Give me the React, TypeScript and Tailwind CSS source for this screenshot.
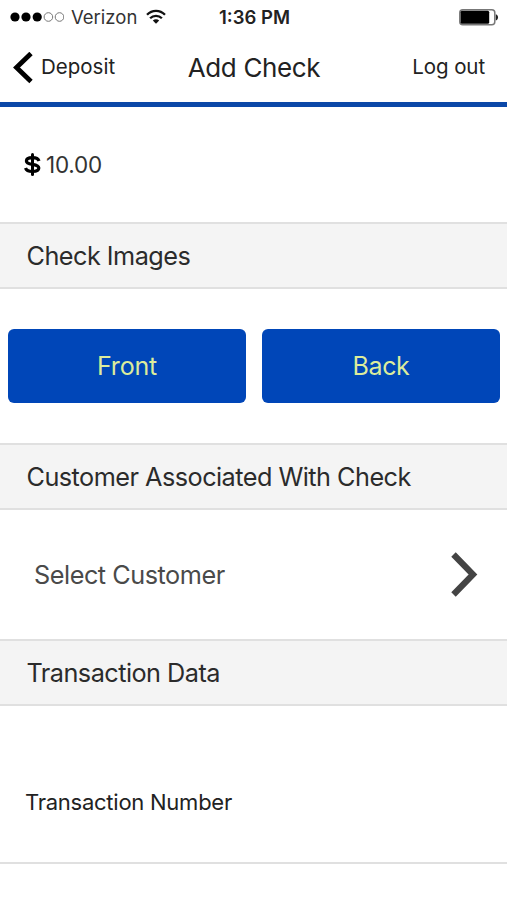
type SectionHeaderProps = {
  title: string;
};

const SignalDots = () => (
  <svg width="54" height="12" viewBox="0 0 54 12">
    <circle cx="5" cy="6" r="4.6" fill="#000" />
    <circle cx="16" cy="6" r="4.6" fill="#000" />
    <circle cx="27.2" cy="6" r="4.6" fill="#000" />
    <circle cx="38.4" cy="6" r="4.3" fill="none" stroke="#777" strokeWidth="1" />
    <circle cx="49.5" cy="6" r="4.3" fill="none" stroke="#777" strokeWidth="1" />
  </svg>
);

const WifiIcon = () => (
  <svg width="20" height="16" viewBox="0 0 20 16" fill="none" stroke="#111" strokeWidth="2.3">
    <path d="M1 5.8C6 0.5 14 0.5 19 5.8" />
    <path d="M4.1 9.3C7.4 6 12.6 6 15.9 9.3" />
    <path d="M10 14.7L6.8 11.5C8.6 9.9 11.4 9.9 13.2 11.5Z" fill="#111" stroke="none" />
  </svg>
);

const BatteryIcon = () => (
  <svg width="40" height="17" viewBox="0 0 40 17">
    <rect x="0.8" y="0.8" width="35" height="15" rx="3" fill="#fff" stroke="#777" strokeWidth="1.5" />
    <rect x="1.6" y="1.8" width="28.6" height="13" rx="1.5" fill="#000" />
    <path d="M36.8 5.2C39.8 6.2 39.8 10.4 36.8 11.4Z" fill="#222" />
  </svg>
);

const DollarIcon = () => (
  <svg width="17" height="23" viewBox="0 0 17 23" fill="none" stroke="#000">
    <path
      d="M15 8C14.2 5.6 12 4.6 8.5 4.6C4.8 4.6 2.4 5.7 2.4 8C2.4 10.3 4.8 10.9 8.5 11.4C12.4 12 14.8 12.8 14.8 15.1C14.8 17.4 12.2 18.5 8.5 18.5C4.8 18.5 2.2 17.5 1.5 15"
      strokeWidth="3.2"
    />
    <path d="M8.5 1.6V21.4" strokeWidth="3" strokeLinecap="round" />
  </svg>
);

const SectionHeader = ({ title }: SectionHeaderProps) => (
  <h2 className="flex h-[67px] items-center border-y-2 border-[#e0e0e0] bg-[#f4f4f4] pt-[2px] pl-[26.5px] text-[25.25px] tracking-[-0.53px] text-[#2b2b2b]">
    {title}
  </h2>
);

const App = () => {
  return (
    <div className="h-[900px] w-[507px] overflow-hidden bg-white font-['Inter',sans-serif] text-[#222] leading-none">
      <div className="grid h-[34px] grid-cols-3 items-center pr-2 pl-[10px]">
        <div className="flex items-center">
          <SignalDots />
          <span className="ml-[7px] text-[18.5px] text-[#333]">Verizon</span>
          <span className="ml-[9px]">
            <WifiIcon />
          </span>
        </div>
        <span className="text-center text-[18.5px] font-semibold">1:36 PM</span>
        <span className="flex justify-end">
          <BatteryIcon />
        </span>
      </div>

      <header className="grid h-[73px] grid-cols-[1fr_auto_1fr] items-center border-b-[5px] border-[#0b48a8] pr-[22px] pb-[1px] pl-[13px]">
        <button className="flex items-center text-[20.5px]">
          <svg width="20" height="32" viewBox="0 0 20 32" fill="none" stroke="#000" strokeWidth="4.8">
            <path d="M18 1.5L3.5 15.5L18 29.5" />
          </svg>
          <span className="ml-2">Deposit</span>
        </button>
        <h1 className="pt-[1px] pl-[10px] text-center text-[26px] tracking-[-0.35px] whitespace-nowrap">Add Check</h1>
        <button className="text-right text-[20.5px] tracking-[-0.1px]">Log out</button>
      </header>

      <div className="flex h-[115px] items-center pl-6">
        <DollarIcon />
        <span className="ml-[5px] pt-[1px] text-[22.5px] tracking-[-0.2px] text-[#333]">10.00</span>
      </div>

      <SectionHeader title="Check Images" />
      <div className="grid h-[154px] grid-cols-2 items-center gap-[16px] pr-[7px] pl-2">
        <button className="h-[74px] rounded-md bg-[#0046b8] pt-[1px] text-[25px] tracking-[-0.2px] text-[#dcec9c]">
          Front
        </button>
        <button className="h-[74px] rounded-md bg-[#0046b8] pt-[1px] text-[25px] tracking-[-0.4px] text-[#dcec9c]">
          Back
        </button>
      </div>

      <SectionHeader title="Customer Associated With Check" />
      <button className="flex h-[129px] w-full items-center justify-between pr-[28px] pl-[34px] text-[25.25px] tracking-[-0.47px] text-[#4a4a4a]">
        <span className="pt-[2px]">Select Customer</span>
        <svg width="28" height="46" viewBox="0 0 28 46" fill="none" stroke="#444" strokeWidth="6.2">
          <path d="M2.5 2.5L22 22.5L2.5 42.5" />
        </svg>
      </button>

      <SectionHeader title="Transaction Data" />
      <div className="flex h-[158px] items-end border-b-2 border-[#e0e0e0] pb-[49px] pl-[25px] text-[22px] tracking-[-0.25px]">
        Transaction Number
      </div>
    </div>
  );
};

export default App;
